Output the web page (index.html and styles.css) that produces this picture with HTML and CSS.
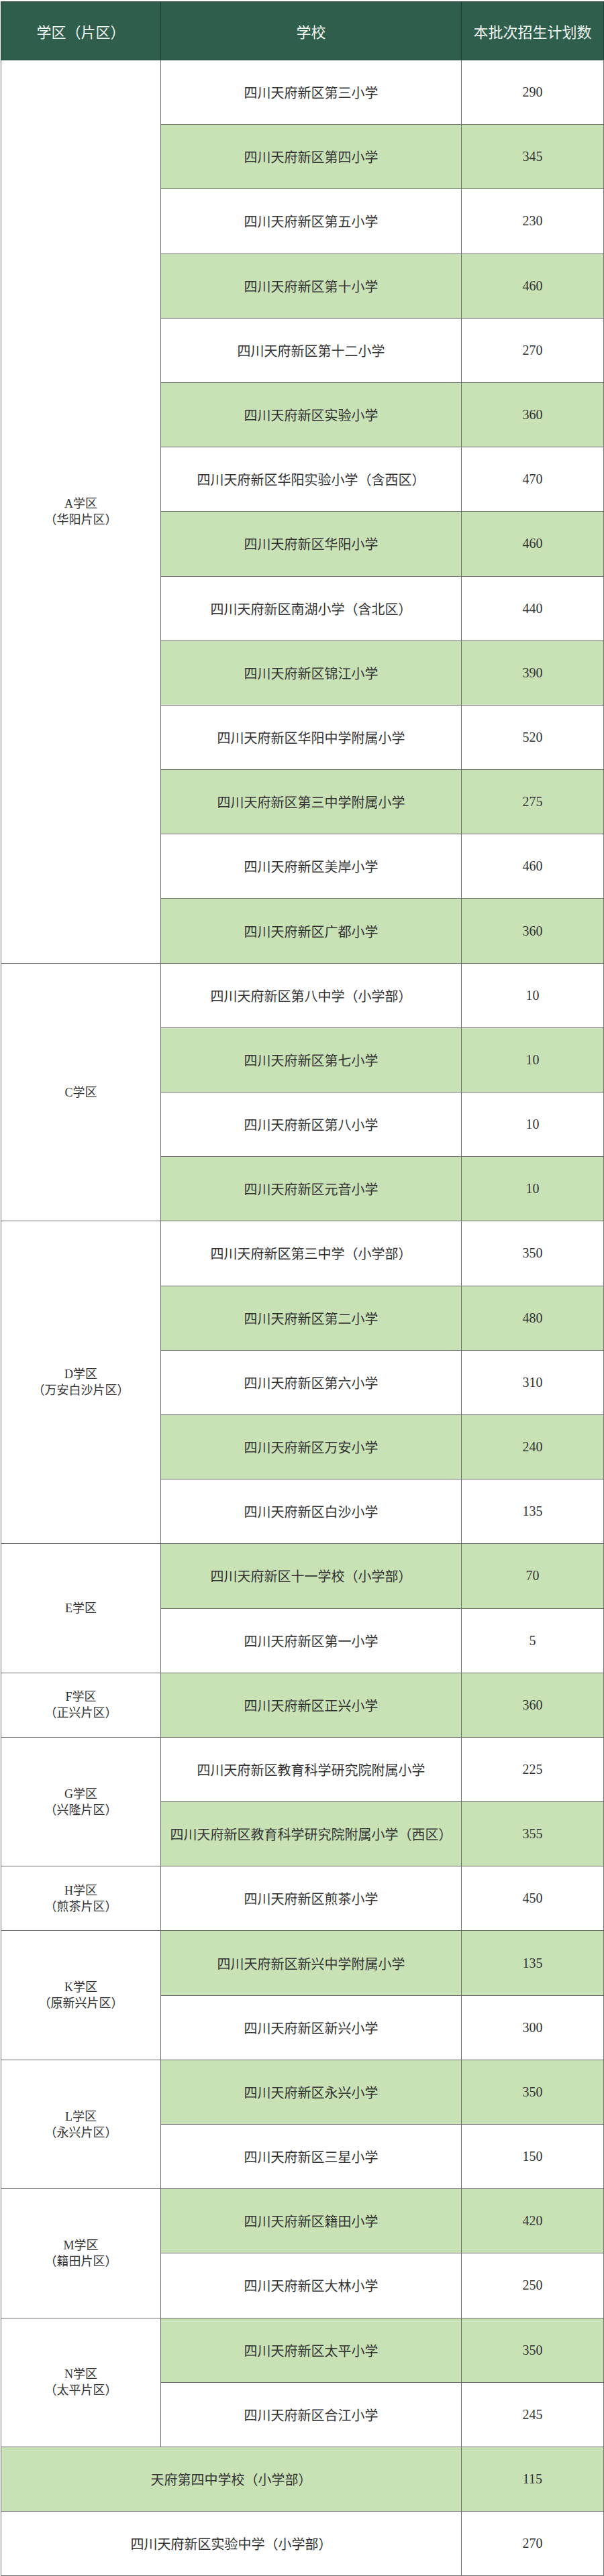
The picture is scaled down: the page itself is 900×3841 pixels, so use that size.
FILE: index.html
```html
<!DOCTYPE html>
<html lang="zh-CN">
<head>
<meta charset="utf-8">
<title>学区招生计划</title>
<link rel="stylesheet" href="styles.css">
</head>
<body>
<table class="plan">
<colgroup><col class="c1"><col class="c2"><col class="c3"></colgroup>
<thead>
<tr><th>学区（片区）</th><th>学校</th><th>本批次招生计划数</th></tr>
</thead>
<tbody>
<tr><td class="zone zone-a" rowspan="14"><span class="zl">A学区</span><span class="zl">（华阳片区）</span></td><td>四川天府新区第三小学</td><td class="num">290</td></tr>
<tr><td>四川天府新区第四小学</td><td class="num">345</td></tr>
<tr><td>四川天府新区第五小学</td><td class="num">230</td></tr>
<tr><td>四川天府新区第十小学</td><td class="num">460</td></tr>
<tr><td>四川天府新区第十二小学</td><td class="num">270</td></tr>
<tr><td>四川天府新区实验小学</td><td class="num">360</td></tr>
<tr><td>四川天府新区华阳实验小学（含西区）</td><td class="num">470</td></tr>
<tr><td>四川天府新区华阳小学</td><td class="num">460</td></tr>
<tr><td>四川天府新区南湖小学（含北区）</td><td class="num">440</td></tr>
<tr><td>四川天府新区锦江小学</td><td class="num">390</td></tr>
<tr><td>四川天府新区华阳中学附属小学</td><td class="num">520</td></tr>
<tr><td>四川天府新区第三中学附属小学</td><td class="num">275</td></tr>
<tr><td>四川天府新区美岸小学</td><td class="num">460</td></tr>
<tr><td>四川天府新区广都小学</td><td class="num">360</td></tr>

<tr><td class="zone" rowspan="4"><span class="zl">C学区</span></td><td>四川天府新区第八中学（小学部）</td><td class="num">10</td></tr>
<tr><td>四川天府新区第七小学</td><td class="num">10</td></tr>
<tr><td>四川天府新区第八小学</td><td class="num">10</td></tr>
<tr><td>四川天府新区元音小学</td><td class="num">10</td></tr>

<tr><td class="zone" rowspan="5"><span class="zl">D学区</span><span class="zl">（万安白沙片区）</span></td><td>四川天府新区第三中学（小学部）</td><td class="num">350</td></tr>
<tr><td>四川天府新区第二小学</td><td class="num">480</td></tr>
<tr><td>四川天府新区第六小学</td><td class="num">310</td></tr>
<tr><td>四川天府新区万安小学</td><td class="num">240</td></tr>
<tr><td>四川天府新区白沙小学</td><td class="num">135</td></tr>

<tr><td class="zone" rowspan="2"><span class="zl">E学区</span></td><td>四川天府新区十一学校（小学部）</td><td class="num">70</td></tr>
<tr><td>四川天府新区第一小学</td><td class="num">5</td></tr>

<tr><td class="zone"><span class="zl">F学区</span><span class="zl">（正兴片区）</span></td><td>四川天府新区正兴小学</td><td class="num">360</td></tr>

<tr><td class="zone" rowspan="2"><span class="zl">G学区</span><span class="zl">（兴隆片区）</span></td><td>四川天府新区教育科学研究院附属小学</td><td class="num">225</td></tr>
<tr><td>四川天府新区教育科学研究院附属小学（西区）</td><td class="num">355</td></tr>

<tr><td class="zone"><span class="zl">H学区</span><span class="zl">（煎茶片区）</span></td><td>四川天府新区煎茶小学</td><td class="num">450</td></tr>

<tr><td class="zone" rowspan="2"><span class="zl">K学区</span><span class="zl">（原新兴片区）</span></td><td>四川天府新区新兴中学附属小学</td><td class="num">135</td></tr>
<tr><td>四川天府新区新兴小学</td><td class="num">300</td></tr>

<tr><td class="zone" rowspan="2"><span class="zl">L学区</span><span class="zl">（永兴片区）</span></td><td>四川天府新区永兴小学</td><td class="num">350</td></tr>
<tr><td>四川天府新区三星小学</td><td class="num">150</td></tr>

<tr><td class="zone" rowspan="2"><span class="zl">M学区</span><span class="zl">（籍田片区）</span></td><td>四川天府新区籍田小学</td><td class="num">420</td></tr>
<tr><td>四川天府新区大林小学</td><td class="num">250</td></tr>

<tr><td class="zone" rowspan="2"><span class="zl">N学区</span><span class="zl">（太平片区）</span></td><td>四川天府新区太平小学</td><td class="num">350</td></tr>
<tr><td>四川天府新区合江小学</td><td class="num">245</td></tr>

<tr><td colspan="2">天府第四中学校（小学部）</td><td class="num">115</td></tr>
<tr><td colspan="2">四川天府新区实验中学（小学部）</td><td class="num">270</td></tr>
</tbody>
</table>
</body>
</html>
```

FILE: styles.css
```css
html, body {
  margin: 0;
  padding: 0;
  background: #ffffff;
}

body {
  padding: 2px 0 0 1px;
}

.plan {
  width: 898px;
  border-collapse: collapse;
  table-layout: fixed;
  font-family: "Liberation Serif", "Noto Sans CJK SC", serif;
  color: #333333;
}

.c1 { width: 238px; }
.c2 { width: 448px; }
.c3 { width: 212px; }

.plan th,
.plan td {
  border: 1px solid #6e6e6e;
  padding: 0;
  text-align: center;
  vertical-align: middle;
}

.plan thead th {
  height: 86px;
  background: #2f5e4d;
  color: #eef3ee;
  font-size: 22px;
  font-weight: 400;
  border-color: #2a4a3d;
  border-right-color: #1f3a30;
}

.plan tbody tr {
  height: 96.2px;
}

.plan tbody td {
  font-size: 20px;
  background: #ffffff;
}

.plan tbody tr:nth-child(even) td {
  background: #c8e2b6;
}

.plan tbody td.zone,
.plan tbody tr:nth-child(even) td.zone {
  background: #ffffff;
  font-size: 18px;
  line-height: 24px;
}

.zl {
  display: block;
}

.num {
  font-size: 20px;
}
```
